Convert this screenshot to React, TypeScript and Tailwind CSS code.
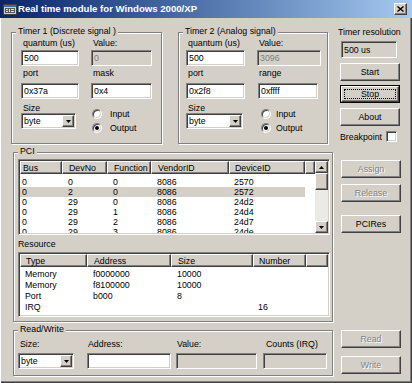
import React from "react";

const SUNKEN =
  "border border-t-[#808080] border-l-[#808080] border-b-white border-r-white shadow-[inset_1px_1px_0_#404040,inset_-1px_-1px_0_#d4d0c8]";
const RAISED =
  "border border-t-white border-l-white border-b-[#404040] border-r-[#404040] shadow-[inset_-1px_-1px_0_#808080]";

function Edit({ text = "", className = "", disabled = false, dim = false }: { text?: string; className?: string; disabled?: boolean; dim?: boolean }) {
  return (
    <div className={`${SUNKEN} ${disabled ? "bg-[#d4d0c8]" : "bg-white"} flex items-center pl-[2px] h-[16px] shrink-0 ${className}`}>
      <span className={dim ? "text-[#808080]" : ""}>{text}</span>
    </div>
  );
}

function Combo({ className = "" }: { className?: string }) {
  return (
    <div className={`${SUNKEN} bg-white flex h-[16px] p-[1px] shrink-0 ${className}`}>
      <span className="flex-1 flex items-center pl-[1px]">byte</span>
      <div className={`${RAISED} bg-[#d4d0c8] w-[12px] h-full flex items-center justify-center`}>
        <svg width="5" height="3" viewBox="0 0 5 3">
          <path d="M0 0h5L2.5 3z" fill="#000" />
        </svg>
      </div>
    </div>
  );
}

function Radio({ label, checked = false, className = "", gap = "ml-[8px]" }: { label: string; checked?: boolean; className?: string; gap?: string }) {
  return (
    <div className={`flex items-center h-[11px] ${className}`}>
      <span className="w-[10px] h-[10px] rounded-full bg-white border border-t-[#808080] border-l-[#808080] border-b-white border-r-white shadow-[inset_1px_1px_0_#404040,inset_-1px_-1px_0_#d4d0c8] flex items-center justify-center">
        {checked && <span className="w-[4px] h-[4px] rounded-full bg-black" />}
      </span>
      <span className={gap}>{label}</span>
    </div>
  );
}

function Btn({ label, disabled = false, className = "" }: { label: string; disabled?: boolean; className?: string }) {
  return (
    <div
      className={`${RAISED} bg-[#d4d0c8] w-[60px] h-[18px] flex items-center justify-center shrink-0 ${
        disabled ? "text-[#808080] [text-shadow:1px_1px_0_#fff]" : ""
      } ${className}`}
    >
      {label}
    </div>
  );
}

function Group({ title, className = "", children }: { title: string; className?: string; children?: React.ReactNode }) {
  return (
    <div className={`relative border border-[#808080] shadow-[inset_1px_1px_0_#fff,1px_1px_0_#fff] shrink-0 ${className}`}>
      <span className="absolute left-[4px] -top-[7px] bg-[#d4d0c8] px-[2px] leading-[10px] whitespace-nowrap">{title}</span>
      {children}
    </div>
  );
}

type TimerProps = {
  title: string;
  q: string;
  val: string;
  port: string;
  mask: string;
  maskLabel: string;
  className: string;
  leftCls: string;
  rightCls: string;
  valW: string;
  maskW: string;
  comboW: string;
  radioCls: string;
  radioGap: string;
};

function Timer(p: TimerProps) {
  return (
    <Group title={p.title} className={p.className}>
      <div className="flex">
        <div className={`flex flex-col ${p.leftCls}`}>
          <span className="mt-[5px] pl-[2px] whitespace-nowrap">quantum (us)</span>
          <Edit text={p.q} className="mt-[2px] w-full" />
          <span className="mt-[2px] pl-[2px]">port</span>
          <Edit text={p.port} className="mt-[5px] w-full" />
          <span className="mt-[4px] pl-[2px]">Size</span>
          <Combo className={p.comboW} />
        </div>
        <div className={`flex flex-col ${p.rightCls}`}>
          <span className="mt-[5px] pl-[2px]">Value:</span>
          <Edit text={p.val} disabled dim className={`mt-[2px] ${p.valW}`} />
          <span className="mt-[2px] pl-[2px]">{p.maskLabel}</span>
          <Edit text={p.mask} className={`mt-[5px] ${p.maskW}`} />
          <Radio label="Input" className={`mt-[9px] ${p.radioCls}`} gap={p.radioGap} />
          <Radio label="Output" checked className={`mt-[3px] ${p.radioCls}`} gap={p.radioGap} />
        </div>
      </div>
    </Group>
  );
}

const pciCols = ["w-[42px] pl-[2px]", "w-[45px] pl-[6px]", "w-[44px] pl-[6px]", "w-[78px] pl-[6px]", "w-[76px] pl-[5px]"];
const pciHead = ["Bus", "DevNo", "Function", "VendorID", "DeviceID"];
const pciRows = [
  ["0", "0", "0", "8086", "2570"],
  ["0", "2", "0", "8086", "2572"],
  ["0", "29", "0", "8086", "24d2"],
  ["0", "29", "1", "8086", "24d4"],
  ["0", "29", "2", "8086", "24d7"],
  ["0", "29", "3", "8086", "24de"],
];

const resCols = ["w-[67px] pl-[5px]", "w-[84px] pl-[6px]", "w-[82px] pl-[6px]", "w-[53px] pl-[5px]"];
const resHead = ["Type", "Address", "Size", "Number"];
const resRows = [
  ["Memory", "f0000000", "10000", ""],
  ["Memory", "f8100000", "10000", ""],
  ["Port", "b000", "8", ""],
  ["IRQ", "", "", "16"],
];

function HeaderRow({ cols, head }: { cols: string[]; head: string[] }) {
  return (
    <div className="flex h-[13px] shrink-0">
      {head.map((h, i) => (
        <div key={h} className={`${RAISED} bg-[#d4d0c8] h-full flex items-center shrink-0 ${cols[i]}`}>
          {h}
        </div>
      ))}
      <div className={`${RAISED} bg-[#d4d0c8] h-full flex-1`} />
    </div>
  );
}

function ScrollBtn({ up }: { up?: boolean }) {
  return (
    <div className={`${RAISED} bg-[#d4d0c8] h-[12px] flex items-center justify-center shrink-0`}>
      <svg width="5" height="3" viewBox="0 0 5 3">
        <path d={up ? "M0 3h5L2.5 0z" : "M0 0h5L2.5 3z"} fill="#000" />
      </svg>
    </div>
  );
}

export default function App() {
  return (
    <div className="font-['Liberation_Sans',Arial,sans-serif] text-[8.8px] leading-[10px] text-black">
      <div className="w-[412px] h-[383px] bg-[#d4d0c8] flex flex-col overflow-hidden shadow-[inset_1px_0_0_#fff,inset_-1px_-1px_0_#404040,inset_-2px_-2px_0_#808080]">
        {/* title bar */}
        <div className="h-[18px] flex items-center bg-linear-to-r from-[#0a246a] to-[#a6caf0] shrink-0">
          <svg className="ml-[3px]" width="14" height="11" viewBox="0 0 14 11">
            <rect x="0.5" y="0.5" width="13" height="10" fill="#d4d0c8" stroke="#404040" />
            <rect x="1" y="1" width="12" height="2" fill="#3a6ea5" />
            <rect x="2" y="4" width="10" height="5" fill="#5a5a5a" />
            <path d="M3 5.5h2M3 7.5h2M6.5 5v3M8 5.5h3M8 7.5h3" stroke="#e0e0e0" strokeWidth="1" />
          </svg>
          <span className="ml-[1px] text-white font-bold text-[9.6px] leading-[18px]">Real time module for Windows 2000/XP</span>
          <div className={`${RAISED} bg-[#d4d0c8] ml-auto mr-[5px] w-[13px] h-[12px] flex items-center justify-center`}>
            <svg width="7" height="6" viewBox="0 0 7 6">
              <path d="M0.5 0.5l6 5M6.5 0.5l-6 5" stroke="#000" strokeWidth="1.4" />
            </svg>
          </div>
        </div>

        {/* timers row */}
        <div className="flex h-[126px] shrink-0">
          <div className="ml-[11px] mt-[14px] flex gap-[16px]">
            <Timer
              title="Timer 1 (Discrete signal )"
              q="500"
              val="0"
              port="0x37a"
              mask="0x4"
              maskLabel="mask"
              className="w-[151px] h-[112px]"
              leftCls="ml-[9px] w-[58px]"
              rightCls="ml-[12px]"
              valW="w-[61px]"
              maskW="w-[61px]"
              comboW="w-[55px]"
              radioCls="ml-[1px]"
              radioGap="ml-[8px]"
            />
            <Timer
              title="Timer 2 (Analog signal)"
              q="500"
              val="3096"
              port="0x2f8"
              mask="0xffff"
              maskLabel="range"
              className="w-[150px] h-[112px]"
              leftCls="ml-[7px] w-[59px]"
              rightCls="ml-[12px]"
              valW="w-[64px]"
              maskW="w-[60px] ml-[1px]"
              comboW="w-[57px]"
              radioCls="ml-[4px]"
              radioGap="ml-[5px]"
            />
          </div>
          <div className="ml-[12px] flex flex-col w-[61px]">
            <span className="mt-[9px] -ml-[2px] whitespace-nowrap">Timer resolution</span>
            <Edit text="500 us" disabled className="mt-[4px] ml-[1px] w-[56px] h-[17px]" />
            <Btn label="Start" className="mt-[5px]" />
            <div className="mt-[4px] w-[60px] h-[18px] border border-black">
              <div className={`${RAISED} bg-[#d4d0c8] h-full p-[2px]`}>
                <div className="h-full border border-dotted border-black flex items-center justify-center">Stop</div>
              </div>
            </div>
            <Btn label="About" className="mt-[5px]" />
            <div className="mt-[5px] flex items-center h-[11px]">
              <span>Breakpoint</span>
              <span className={`${SUNKEN} bg-white w-[11px] h-[11px] ml-auto mr-[4px]`} />
            </div>
          </div>
        </div>

        {/* PCI row */}
        <div className="flex mt-[8px] shrink-0">
          <Group title="PCI" className="ml-[13px] w-[320px] h-[170px]">
            <div className="flex flex-col">
              <div className={`${SUNKEN} bg-white mt-[6px] ml-[4px] w-[312px] h-[76px] p-[1px] flex`}>
                <div className="flex-1 flex flex-col overflow-hidden">
                  <HeaderRow cols={pciCols} head={pciHead} />
                  <div className="pt-[3px]">
                    {pciRows.map((r, ri) => (
                      <div key={ri} className={`flex h-[10px] items-center w-[285px] ${ri === 1 ? "bg-[#d4d0c8]" : ""}`}>
                        {r.map((c, ci) => (
                          <span key={ci} className={`shrink-0 ${pciCols[ci]}`}>
                            {c}
                          </span>
                        ))}
                      </div>
                    ))}
                  </div>
                </div>
                <div className="w-[13px] flex flex-col shrink-0">
                  <ScrollBtn up />
                  <div className={`${RAISED} bg-[#d4d0c8] h-[17px] shrink-0`} />
                  <div className="flex-1 bg-[#eceae6]" />
                  <ScrollBtn />
                </div>
              </div>
              <span className="mt-[4px] ml-[4px]">Resource</span>
              <div className={`${SUNKEN} bg-white mt-[3px] ml-[4px] w-[312px] h-[65px] p-[1px] flex flex-col overflow-hidden`}>
                <HeaderRow cols={resCols} head={resHead} />
                <div className="pt-[1px]">
                  {resRows.map((r, ri) => (
                    <div key={ri} className="flex h-[11px] items-center">
                      {r.map((c, ci) => (
                        <span key={ci} className={`shrink-0 ${resCols[ci]}`}>
                          {c}
                        </span>
                      ))}
                    </div>
                  ))}
                </div>
              </div>
            </div>
          </Group>
          <div className="ml-[8px] flex flex-col">
            <Btn label="Assign" disabled className="mt-[8px]" />
            <Btn label="Release" disabled className="mt-[6px]" />
            <Btn label="PCIRes" className="mt-[13px]" />
          </div>
        </div>

        {/* Read/Write row */}
        <div className="flex mt-[8px] shrink-0">
          <Group title="Read/Write" className="ml-[13px] w-[320px] h-[46px]">
            <div className="flex">
              <div className="ml-[4px] flex flex-col">
                <span className="mt-[8px] pl-[2px]">Size:</span>
                <Combo className="mt-[4px] w-[56px]" />
              </div>
              <div className="ml-[13px] flex flex-col">
                <span className="mt-[8px] pl-[1px]">Address:</span>
                <Edit className="mt-[4px] w-[84px]" />
              </div>
              <div className="ml-[5px] flex flex-col">
                <span className="mt-[8px] pl-[1px]">Value:</span>
                <Edit disabled className="mt-[4px] w-[81px]" />
              </div>
              <div className="ml-[6px] flex flex-col">
                <span className="mt-[8px] pl-[3px]">Counts (IRQ)</span>
                <Edit disabled className="mt-[4px] w-[64px]" />
              </div>
            </div>
          </Group>
          <div className="ml-[8px] flex flex-col">
            <Btn label="Read" disabled />
            <Btn label="Write" disabled className="mt-[8px]" />
          </div>
        </div>
      </div>
    </div>
  );
}
